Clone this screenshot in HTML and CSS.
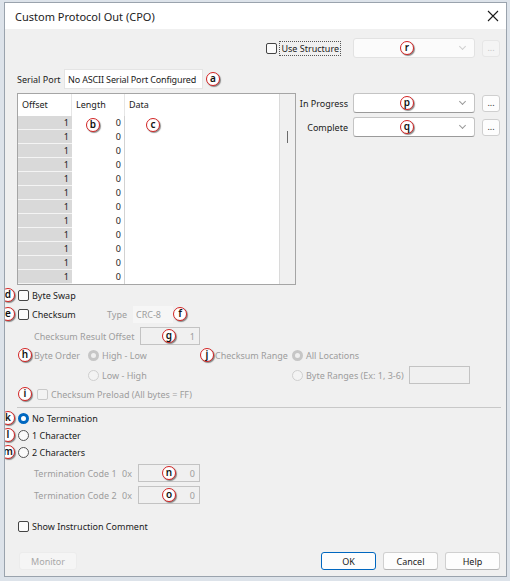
FILE: index.html
```html
<!doctype html>
<html lang="en">
 <head>
  <meta charset="UTF-8">
  <title>Custom Protocol Out (CPO)</title>
  <link rel="stylesheet" href="styles.css">
 </head>
 <body>
  <div class="window">
   <div class="titlebar">
    <span class="title">Custom Protocol Out (CPO)</span>
    <svg class="close" width="12" height="12" viewBox="0 0 12 12"><path d="M1 1 L11 11 M11 1 L1 11" stroke="#1a1a1a" stroke-width="1.1"/></svg>
   </div>
   <div class="content">
    <div class="row struct-row">
     <span class="check"><span class="box"></span><span class="focus-text">Use Structure</span></span>
     <div class="combo off"><span class="badge" style="left: 46px">r</span><span class="chev"></span></div>
     <button class="dots off">...</button>
    </div>

    <div class="row serial-row">
     <span class="serial-label">Serial Port</span>
     <span class="field">No ASCII Serial Port Configured</span>
     <span class="badge inline">a</span>
    </div>

    <div class="main">
     <div class="grid">
      <div class="table">
       <div class="thead">
        <span class="c-off">Offset</span><span class="c-len">Length</span><span class="c-data">Data</span>
       </div>
       <div class="tbody" id="rows"></div>
       <span class="badge" style="left: 68px; top: 24px">b</span>
       <span class="badge" style="left: 128px; top: 24px">c</span>
      </div>
      <div class="scroll"><span class="thumb"></span></div>
     </div>
     <div class="side">
      <div class="side-row">
       <span class="side-label">In Progress</span>
       <div class="combo"><span class="badge" style="left: 46px">p</span><span class="chev"></span></div>
       <button class="dots">...</button>
      </div>
      <div class="side-row">
       <span class="side-label">Complete</span>
       <div class="combo"><span class="badge" style="left: 46px">q</span><span class="chev"></span></div>
       <button class="dots">...</button>
      </div>
     </div>
    </div>

    <div class="row opt-row">
     <span class="badge gutter">d</span>
     <span class="check"><span class="box"></span>Byte Swap</span>
    </div>

    <div class="row sum-row">
     <span class="badge gutter">e</span>
     <span class="check sum-check"><span class="box"></span>Checksum</span>
     <span class="dim type-label">Type</span>
     <span class="type-box">CRC-8</span>
     <span class="badge inline">f</span>
    </div>

    <div class="row sub-row">
     <span class="dim offset-label">Checksum Result Offset</span>
     <span class="num-box"><span class="badge" style="left: 21px">g</span>1</span>
    </div>

    <div class="row radio-row">
     <span class="badge gutter sub">h</span>
     <div class="left-group">
      <span class="dim order-label">Byte Order</span>
      <span class="radio dim"><span class="dot on-off"></span>High - Low</span>
     </div>
     <div class="right-group">
      <span class="badge" style="left: -15px">j</span>
      <span class="dim range-label">Checksum Range</span>
      <span class="radio dim"><span class="dot on-off"></span>All Locations</span>
     </div>
    </div>

    <div class="row sub-row">
     <div class="left-group indent">
      <span class="radio dim"><span class="dot off"></span>Low - High</span>
     </div>
     <div class="right-group indent">
      <span class="radio dim"><span class="dot off"></span>Byte Ranges (Ex: 1, 3-6)</span>
      <span class="range-box"></span>
     </div>
    </div>

    <div class="row opt-row">
     <span class="badge gutter sub">i</span>
     <span class="check dim preload"><span class="box off"></span>Checksum Preload (All bytes = FF)</span>
    </div>

    <hr class="sep">

    <div class="row opt-row">
     <span class="badge gutter">k</span>
     <span class="radio"><span class="dot sel"></span>No Termination</span>
    </div>
    <div class="row opt-row">
     <span class="badge gutter">l</span>
     <span class="radio"><span class="dot"></span>1 Character</span>
    </div>
    <div class="row opt-row">
     <span class="badge gutter">m</span>
     <span class="radio"><span class="dot"></span>2 Characters</span>
    </div>

    <div class="row sub-row code-row">
     <span class="dim code-label">Termination Code 1</span>
     <span class="dim hex">0x</span>
     <span class="num-box code"><span class="badge" style="left: 23px">n</span>0</span>
    </div>
    <div class="row sub-row code-row second">
     <span class="dim code-label">Termination Code 2</span>
     <span class="dim hex">0x</span>
     <span class="num-box code"><span class="badge" style="left: 23px">o</span>0</span>
    </div>

    <div class="row opt-row comment-row">
     <span class="check"><span class="box"></span>Show Instruction Comment</span>
    </div>

    <div class="row buttons">
     <button class="btn off monitor">Monitor</button>
     <button class="btn default">OK</button>
     <button class="btn">Cancel</button>
     <button class="btn">Help</button>
    </div>
   </div>
  </div>
  <script>
    // fill the grid rows
    const rows = document.getElementById("rows");
    for (let i = 0; i < 12; i++) {
      const row = document.createElement("div");
      row.className = "trow";
      row.innerHTML = '<span class="c-off">1</span><span class="c-len">0</span><span class="c-data"></span>';
      rows.appendChild(row);
    }
  </script>
 </body>
</html>
```
FILE: styles.css
```css
:root {
  --text: #1b1b1b;
  --dim: #9d9d9d;
  --face: #f0f0f0;
  --border: #bcbcbc;
  --accent: #0067c0;
  --badge-red: #d42323;
}

body {
  margin: 0;
  background: #dde3ea;
  font-family: "Noto Sans", "Open Sans", sans-serif;
  font-size: 9px;
  color: var(--text);
}

.window {
  margin: 2px 0 0 4px;
  width: 501px;
  height: 573px;
  border: 1px solid #9aa3ad;
  background: var(--face);
  overflow: hidden;
}

.titlebar {
  height: 26px;
  background: #ffffff;
  display: flex;
  align-items: center;
  justify-content: space-between;
  padding: 0 7px 0 10px;
}

.title {
  font-size: 11px;
  color: #222;
}

.content {
  padding: 0 5px 0 12px;
}

.row {
  position: relative;
  display: flex;
  align-items: center;
}

/* badges for the callout letters */
.badge {
  position: absolute;
  top: 50%;
  margin-top: -7px;
  width: 14px;
  height: 14px;
  box-sizing: border-box;
  border: 1.5px solid var(--badge-red);
  border-radius: 50%;
  background: #fff;
  color: #111;
  font-size: 10px;
  font-weight: 600;
  line-height: 10px;
  text-align: center;
  box-shadow: 1px 1px 1px rgba(0, 0, 0, 0.45);
  z-index: 2;
}

.badge.inline {
  position: static;
  margin-top: 0;
  flex: none;
}

.badge.gutter {
  left: -16px;
}

.badge.gutter.sub {
  left: 1px;
}

.table .badge {
  margin-top: 0;
}

/* checkboxes and radios */
.check, .radio {
  display: flex;
  align-items: center;
  white-space: nowrap;
}

.box {
  width: 11px;
  height: 11px;
  box-sizing: border-box;
  border: 1px solid #444;
  border-radius: 2px;
  background: #fbfbfb;
  margin: 0 3px 0 1px;
  flex: none;
}

.box.off {
  border-color: #c9c9c9;
  background: #f3f3f3;
}

.dot {
  width: 11px;
  height: 11px;
  box-sizing: border-box;
  border: 1px solid #555;
  border-radius: 50%;
  background: #fbfbfb;
  margin: 0 3px 0 1px;
  flex: none;
}

.dot.sel {
  border: 3px solid var(--accent);
  background: #fff;
}

.dot.off {
  border-color: #cfcfcf;
  background: #f3f3f3;
}

.dot.on-off {
  border: 3px solid #c6c6c6;
  background: #efefef;
}

.dim {
  color: var(--dim);
}

/* combos and small buttons */
.combo {
  position: relative;
  width: 122px;
  height: 20px;
  box-sizing: border-box;
  border: 1px solid #c4c4c4;
  border-bottom-color: #9a9a9a;
  border-radius: 3px;
  background: #fff;
  flex: none;
}

.combo.off {
  border-color: #e2e2e2;
  background: #fbfbfb;
}

.chev {
  position: absolute;
  right: 9px;
  top: 5px;
  width: 4px;
  height: 4px;
  border-right: 1px solid #9a9a9a;
  border-bottom: 1px solid #9a9a9a;
  transform: rotate(45deg);
}

.combo.off .chev {
  border-color: #cfcfcf;
}

.dots {
  width: 18px;
  height: 17px;
  margin-left: 7px;
  padding: 0 0 4px;
  box-sizing: border-box;
  border: 1px solid #cfcfcf;
  border-radius: 3px;
  background: #fdfdfd;
  font-family: inherit;
  font-size: 9px;
  color: #333;
  flex: none;
}

.dots.off {
  background: #f4f4f4;
  border-color: #e6e6e6;
  color: #c4c4c4;
}

/* top rows */
.struct-row {
  margin-top: 9px;
  height: 20px;
  justify-content: flex-end;
  padding-right: 1px;
}

.struct-row .check {
  margin-right: 13px;
}

.focus-text {
  outline: 1px dotted #555;
  padding: 0 1px;
}

.serial-row {
  margin-top: 11px;
  height: 20px;
}

.serial-label {
  width: 47px;
}

.field {
  height: 20px;
  line-height: 19px;
  box-sizing: border-box;
  padding: 0 3px;
  width: 139px;
  white-space: nowrap;
  overflow: hidden;
  letter-spacing: -0.15px;
  background: #fff;
  border: 1px solid #e4e4e4;
  margin-right: 3px;
}

/* grid + side */
.main {
  display: flex;
  margin-top: 4px;
}

.grid {
  display: flex;
  width: 279px;
  height: 192px;
  box-sizing: border-box;
  border: 1px solid #a5a5a5;
  flex: none;
}

.table {
  position: relative;
  width: 261px;
  background: #fff;
}

.thead, .trow {
  display: flex;
}

.thead {
  height: 22px;
  line-height: 21px;
  color: #222;
}

.thead span {
  box-sizing: border-box;
  padding-left: 4px;
}

.thead .c-off {
  width: 54px;
  border-right: 1px solid #e6e6e6;
}

.thead .c-len {
  width: 53px;
  border-right: 1px solid #e6e6e6;
}

.thead .c-data {
  width: 154px;
}

.trow {
  height: 14px;
  line-height: 14px;
  color: #222;
}

.trow span {
  box-sizing: border-box;
  text-align: right;
  padding-right: 3px;
}

.trow .c-off {
  width: 54px;
  background: #d9d9d9;
  border-bottom: 1px solid #f4f4f4;
  line-height: 13px;
}

.trow .c-len {
  width: 53px;
  border-right: 1px solid #d2d2d2;
}

.trow .c-data {
  width: 154px;
}

.scroll {
  position: relative;
  flex: 1;
  border-left: 1px solid #dadada;
  background: var(--face);
}

.thumb {
  position: absolute;
  left: 7px;
  top: 37px;
  width: 1px;
  height: 12px;
  background: #6b6b6b;
}

.side {
  flex: 1;
}

.side-row {
  display: flex;
  justify-content: flex-end;
  align-items: center;
  height: 20px;
  padding-right: 1px;
  margin-bottom: 4px;
}

.side-label {
  margin-right: 5px;
}

/* checksum section */
.opt-row {
  height: 14px;
  margin-top: 3px;
}

.sum-row {
  height: 18px;
  margin-top: 3px;
}

.sum-check {
  width: 90px;
}

.type-label {
  width: 26px;
}

.type-box {
  width: 40px;
  height: 17px;
  line-height: 17px;
  box-sizing: border-box;
  padding-left: 3px;
  color: var(--dim);
  background: #f6f6f6;
}

.sub-row {
  height: 18px;
  margin-top: 4px;
}

.offset-label {
  margin-left: 17px;
  width: 106px;
}

.num-box {
  position: relative;
  width: 60px;
  height: 18px;
  line-height: 17px;
  box-sizing: border-box;
  border: 1px solid #c3c3c3;
  text-align: right;
  padding-right: 4px;
  color: var(--dim);
}

.radio-row {
  height: 14px;
  margin-top: 3px;
}

.left-group {
  display: flex;
  align-items: center;
  margin-left: 17px;
  width: 181px;
}

.left-group.indent {
  padding-left: 53px;
  box-sizing: border-box;
}

.order-label {
  width: 53px;
}

.right-group {
  position: relative;
  display: flex;
  align-items: center;
}

.right-group.indent {
  padding-left: 76px;
}

.range-label {
  width: 76px;
}

.range-box {
  width: 61px;
  height: 18px;
  box-sizing: border-box;
  border: 1px solid #c3c3c3;
  margin-left: 5px;
}

.preload {
  margin-left: 19px;
}

.sep {
  margin: 6px 0 0;
  border: none;
  border-top: 1px solid #c8c8c8;
  height: 0;
}

/* termination */
.code-row {
  margin-top: 5px;
}

.code-row.second {
  margin-top: 4px;
}

.code-label {
  margin-left: 17px;
  width: 88px;
}

.hex {
  width: 16px;
}

.num-box.code {
  width: 62px;
}

.comment-row {
  margin-top: 15px;
}

/* bottom buttons */
.buttons {
  margin-top: 19px;
  padding: 0 1px;
}

.btn {
  height: 18px;
  width: 55px;
  margin-left: 7px;
  box-sizing: border-box;
  border: 1px solid #d0d0d0;
  border-bottom-color: #b5b5b5;
  border-radius: 3px;
  background: #fdfdfd;
  font-family: inherit;
  font-size: 9px;
  color: #1b1b1b;
  padding: 0;
}

.btn.monitor {
  width: 58px;
  margin-left: 1px;
  margin-right: auto;
}

.btn.off {
  background: #f5f5f5;
  border-color: #ececec;
  color: #a8a8a8;
}

.btn.default {
  border: 1.5px solid var(--accent);
}
```
